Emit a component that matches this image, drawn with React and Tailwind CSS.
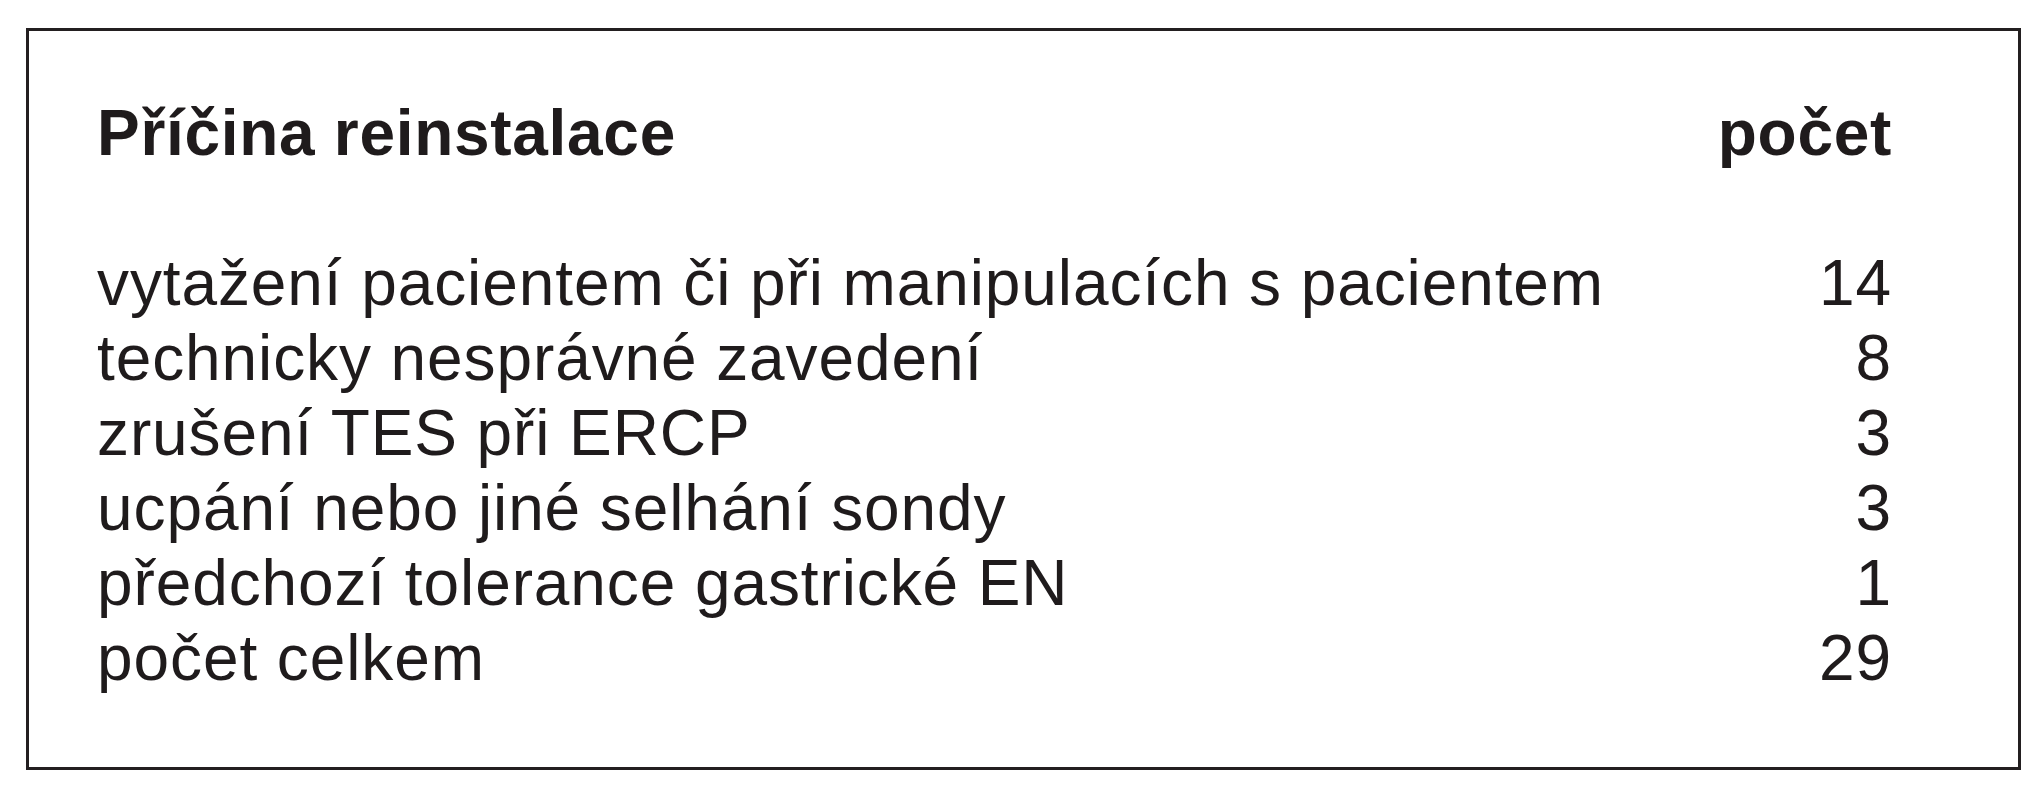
import React from 'react';

const rows = [
  ['vytažení pacientem či při manipulacích s pacientem', '14'],
  ['technicky nesprávné zavedení', '8'],
  ['zrušení TES při ERCP', '3'],
  ['ucpání nebo jiné selhání sondy', '3'],
  ['předchozí tolerance gastrické EN', '1'],
  ['počet celkem', '29'],
];

function App() {
  return (
    <div className="min-h-screen bg-white pt-[28px] pl-[26px] font-['Liberation_Sans',Arial,sans-serif] text-[#1f1b1c]">
      <div className="w-[1995px] h-[742px] border-[3px] border-[#231f20] pt-[65px] pl-[68px] pr-[126px] text-[64px] leading-[75px]">
        <div className="flex justify-between font-bold tracking-[0.7px]">
          <span>Příčina reinstalace</span>
          <span>počet</span>
        </div>
        <div className="h-[75px]" />
        {rows.map(([label, count], i) => (
          <div key={i} className="flex justify-between tracking-[0.9px]">
            <span>{label}</span>
            <span>{count}</span>
          </div>
        ))}
      </div>
    </div>
  );
}

export default App;
